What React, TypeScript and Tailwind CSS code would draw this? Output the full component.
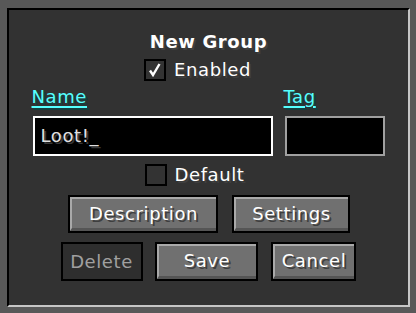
import React from 'react';

const font = "font-['DejaVu_Sans',sans-serif] text-[18px] tracking-[0.6px] leading-none";
const shadow = '[text-shadow:2px_2px_0_#3f3f3f]';

const Btn: React.FC<{ label: string; w: string; h?: string; disabled?: boolean }> = ({ label, w, h = 'h-[38px]', disabled }) => {
  if (disabled) {
    return (
      <div className={`${w} ${h} border-2 border-black bg-[#2e2e2e] flex items-center justify-center`}>
        <span className="text-[#a0a0a0]">{label}</span>
      </div>
    );
  }
  return (
    <div className={`${w} ${h} border-2 border-black bg-[#555555]`}>
      <div className="h-full border-t-2 border-l-2 border-[#a9a9a9] border-b-[3px] border-b-[#555555] bg-[#707070] flex items-center justify-center">
        <span className={`text-white ${shadow}`}>{label}</span>
      </div>
    </div>
  );
};

const Check: React.FC<{ checked?: boolean; label: string }> = ({ checked, label }) => (
  <div className="flex items-center gap-[8px] h-[22px]">
    <div className="w-[22px] h-[22px] border-2 border-black bg-[#333333] flex items-center justify-center">
      {checked && (
        <svg width="14" height="14" viewBox="0 0 14 14">
          <path d="M2 7.5 L5 12 L11.5 1" fill="none" stroke="#fff" strokeWidth="2.4" strokeLinejoin="miter" />
        </svg>
      )}
    </div>
    <span className={`text-white ${shadow}`}>{label}</span>
  </div>
);

export default function App() {
  return (
    <div className={`w-[416px] h-[313px] bg-[#585858] pt-[8px] pl-[7px] pr-[6px] pb-[6px] ${font}`}>
      <div className="h-full border-t-2 border-l-2 border-black border-r-2 border-b-2 border-r-[#c6c6c6] border-b-[#c6c6c6] bg-[#323232] flex flex-col items-center pt-[20px]">
        <div className={`h-[24px] flex items-center font-bold text-white ${shadow}`}>New Group</div>
        <div className="mt-[5px] -ml-[22px]">
          <Check checked label="Enabled" />
        </div>
        <div className="mt-[7px] h-[20px] w-[352px] flex gap-[12px]">
          <span className="w-[240px] -ml-[1px] text-[#55ffff] underline underline-offset-[3px] decoration-2 [text-shadow:2px_2px_0_#153f3f]">Name</span>
          <span className="text-[#55ffff] underline underline-offset-[3px] decoration-2 [text-shadow:2px_2px_0_#153f3f]">Tag</span>
        </div>
        <div className="mt-[8px] flex gap-[12px]">
          <div className="w-[240px] h-[40px] border-2 border-white bg-black flex items-center pl-[6px]">
            <span className="text-[#e0e0e0] [text-shadow:2px_2px_0_#383838]">Loot!_</span>
          </div>
          <div className="w-[100px] h-[40px] border-2 border-[#a0a0a0] bg-black" />
        </div>
        <div className="mt-[8px] -ml-[28px]">
          <Check label="Default" />
        </div>
        <div className="mt-[9px] flex gap-[14px]">
          <Btn label="Description" w="w-[150px]" />
          <Btn label="Settings" w="w-[118px]" />
        </div>
        <div className="mt-[9px] flex gap-[12px] -ml-[1px]">
          <Btn label="Delete" w="w-[82px]" h="h-[39px]" disabled />
          <Btn label="Save" w="w-[103px]" h="h-[39px]" />
          <div className="ml-[1px]">
            <Btn label="Cancel" w="w-[85px]" h="h-[39px]" />
          </div>
        </div>
      </div>
    </div>
  );
}
